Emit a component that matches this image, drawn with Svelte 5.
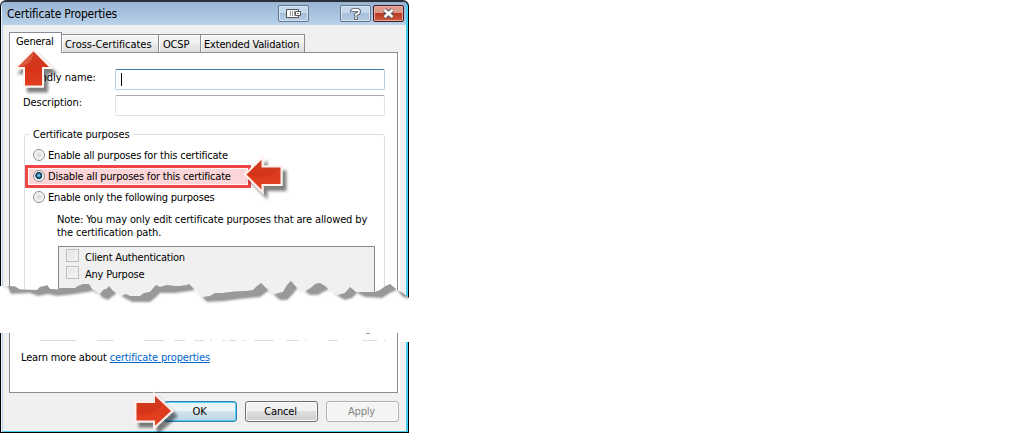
<script>
  const tabs = [
    { label: 'General', w: 53 },
    { label: 'Cross-Certificates', w: 97 },
    { label: 'OCSP', w: 42 },
    { label: 'Extended Validation', w: 104 }
  ];
  const purposes = [
    'Enable all purposes for this certificate',
    'Disable all purposes for this certificate',
    'Enable only the following purposes'
  ];
  let active = $state(0);
  let selected = $state(1);

  const edge = '0,11 8,11 15,11.5 20,14.5 37,15 40,12 45,11 47,10 50,14 58,14.5 60,13 75,13 78,11 83,9 89,9 92,14 97,17 100,19 103,15 107,13.5 109,11 113,16 118,19 121,21 126,19 130,21 140,21 144,18 150,17 156,10 160,12 167,10 175,11 180,11 187,10 189,9 196,16 203,22 210,21 215,18 222,18 235,16.5 247,16 253,15 257,11 261,8 266,13 272,18 275,19 283,17 287,10 291,6 297,13 301,16 306,16 312,12 315,9 320,8 325,11 330,16 338,20 345,18 350,12 356,17 375,17 380,15 385,11.5 390,9 396,14 403,18 409,23';
  const shade = '409,24 403,22 397,15 390,18 382,23 365,22 357,18 352,23 345,25 336,20 329,15 325,16 318,20 310,20 304,16 297,14 292,20 287,25 280,25 273,19 268,16 260,22 240,24 225,26 207,27 202,22 195,15 190,16 175,18 160,18 155,23 150,27 132,27 121,21 117,18 113,21 108,25 103,23 99,19 92,16 88,17 75,19 57,21 48,19 38,21 30,18 11,19 8,12';
</script>

{#snippet arrow(name)}
  <svg class="arrow {name}" viewBox="0 0 48 48" aria-hidden="true">
    <defs>
      <linearGradient id="red-{name}" x1="0" y1="0" x2="0" y2="1">
        <stop offset="0" stop-color="#cf3f28" /><stop offset=".5" stop-color="#d43519" /><stop offset="1" stop-color="#e33b1b" />
      </linearGradient>
      <filter id="drop-{name}" x="-30%" y="-30%" width="180%" height="180%">
        <feDropShadow dx="4" dy="5" stdDeviation="1.7" flood-color="#000" flood-opacity=".5" />
      </filter>
    </defs>
    {#if name === 'up'}
      <path d="M19.5 2 37.5 20H29V38.5H10V20H1.5Z" filter="url(#drop-up)" fill="url(#red-up)" stroke="#fff4ef" stroke-width="2" />
      <path d="M4.5 19Q16 18 20 5L11 13Z" fill="#ef8b78" opacity=".4" />
    {:else if name === 'left'}
      <path d="M3 19.5 20.5 2.5V11.5H39.5V30H20.5V37Z" filter="url(#drop-left)" fill="url(#red-left)" stroke="#fff0ec" stroke-width="2" />
      <path d="M5 20Q28 26 38 13V29H19V33Z" fill="#f04a28" opacity=".3" />
    {:else}
      <path d="M2.5 12H21V3.5L39.5 21 21 38V31.5H2.5Z" filter="url(#drop-right)" fill="url(#red-right)" stroke="#fff0ec" stroke-width="2" />
      <path d="M4 25Q25 24 30 13L37 21 22 35V30H4Z" fill="#f04a28" opacity=".35" />
    {/if}
  </svg>
{/snippet}

<div class="page">
  <section class="window top">
    <header>
      <span class="title">Certificate Properties</span>
      <button class="cap dock" aria-label="Dock">
        <svg width="17" height="11" viewBox="0 0 17 11"><path d="M1.5 1.5h12v8h-12z" fill="#f8f8f8" stroke="#555" /><path d="M5.5 3v5M7.5 3v5M9.5 3v5" stroke="#999" /><path d="M10.5 3.5h5v4h-5z" fill="#fff" stroke="#555" /><path d="M12 5.5h2" stroke="#777" /></svg>
      </button>
      <button class="cap help" aria-label="Help">
        <svg width="12" height="14" viewBox="0 0 12 14" fill="none"><path d="M2 5.2V4Q2 3 3.5 3h4Q9 3 9 4.2v1Q9 6.2 7.5 6.7L6 7.5V9.2M6 10v2.8" stroke="#4d535c" stroke-width="3.6" /><path d="M2 4.6V4Q2 3 3.5 3h4Q9 3 9 4.2v1Q9 6.2 7.5 6.7L6 7.5V8.8M6 10.2v1.9" stroke="#fff" stroke-width="1.8" /></svg>
      </button>
      <button class="cap close" aria-label="Close">
        <svg width="13" height="11" viewBox="0 0 13 11"><path d="M2.5 2 10.5 9M10.5 2 2.5 9" stroke="#555a66" stroke-width="4.6" /><path d="M2.5 2 10.5 9M10.5 2 2.5 9" stroke="#fff" stroke-width="2.5" /></svg>
      </button>
    </header>
    <nav>
      {#each tabs as tab, i}
        <button class="tab" class:on={active === i} style="width:{tab.w}px" onclick={() => (active = i)}>{tab.label}</button>
      {/each}
    </nav>
    <div class="panel">
      <label class="field"><span>Friendly name:</span><span class="input focus"><i></i></span></label>
      <label class="field"><span>Description:</span><span class="input"></span></label>
      <div class="group">
        <div class="legend">Certificate purposes</div>
        <div class="group-body">
          {#each purposes as p, i}
            <button class="radio" class:marked={i === 1} onclick={() => (selected = i)}>
              <span class="dot" class:on={selected === i}></span><span>{p}</span>
            </button>
          {/each}
          <p>Note: You may only edit certificate purposes that are allowed by<br />the certification path.</p>
          <div class="list">
            <div><span class="box"></span>Client Authentication</div>
            <div><span class="box"></span>Any Purpose</div>
          </div>
        </div>
      </div>
    </div>
    <svg class="tear" width="409" height="31" viewBox="0 0 409 31">
      <defs>
        <clipPath id="below"><polygon points="{edge} 409,31 0,31" /></clipPath>
        <filter id="soft"><feGaussianBlur stdDeviation="1" /></filter>
      </defs>
      <polygon points="{edge} 409,31 0,31" fill="#fff" />
      <g clip-path="url(#below)">
        <polygon points="{edge} {shade}" fill="#999" filter="url(#soft)" />
        <polygon points="{edge.slice(5)} {shade}" fill="#999" transform="translate(0 -1.5)" />
      </g>
    </svg>
  </section>

  <section class="window bottom">
    <div class="panel end">
      <svg class="remnant" width="387" height="10" viewBox="0 0 387 10">
        <path d="M30 7.5h36M87 7.5h17M134 7.5h20M164 7.5h11M184 7.5h10M200 7.5h2M212 7.5h3M219 7.5h7M232 7.5h3M244 7.5h20M276 7.5h13M295 7.5h2M318 7.5h10M352 7.5h15M374 7.5h2" stroke="#d5dfe5" />
        <path d="M356 .5h4" stroke="#999" />
      </svg>
      <div class="learn">Learn more about <a href="#properties">certificate properties</a></div>
    </div>
    <footer>
      <button class="btn ok">OK</button><button class="btn">Cancel</button><button class="btn" disabled>Apply</button>
    </footer>
    <div class="corner"></div>
  </section>

  {@render arrow('up')}
  {@render arrow('left')}
  {@render arrow('right')}
</div>

<style>
  :global(body) { margin: 0; background: #fff; }
  .page { position: relative; width: 409px; height: 433px; display: flex; flex-direction: column; justify-content: space-between; font: 11px/14px "DejaVu Sans Condensed", "DejaVu Sans", sans-serif; font-stretch: condensed; color: #000; letter-spacing: -.19px; }
  .page * { box-sizing: border-box; }
  button { font: inherit; letter-spacing: inherit; color: inherit; padding: 0; margin: 0; border: 0; background: none; white-space: nowrap; }
  .window { position: relative; width: 409px; background: #f0f0f0; box-shadow: inset 1px 0 #000, inset -1px 0 #000, inset 2px 0 #e5f3ff, inset 3px 0 #b9d1ea, inset -3px 0 #45cdef; overflow: hidden; }
  .top { height: 306px; border-radius: 6px 6px 0 0; border-top: 2px solid #292e38; }
  header { display: flex; align-items: flex-start; height: 23px; margin: 0 3px 0 2px; padding: 3px 2px 0 5px; background: linear-gradient(#98b4d2, #b9d1ea); }
  .title { flex: 1; font-size: 12px; line-height: 18px; letter-spacing: -.18px; }
  .cap { display: grid; place-items: center; width: 31px; height: 17px; border: 1px solid #65778d; border-radius: 2px; box-shadow: inset 0 0 0 1px #d7e5f4; background: linear-gradient(#c5d7eb 45%, #a6bfda 50%, #b6cce4); }
  .dock { margin-right: 31px; }
  .help { margin-right: 2px; }
  .close { border-color: #431b24; box-shadow: inset 0 0 0 1px #e5aaa0; background: linear-gradient(#dc9a8b 45%, #b93724 50%, #cf5b3c); }
  nav { display: flex; align-items: flex-end; height: 27px; padding-left: 9px; }
  .tab { height: 18px; padding: 2px 0 0 3px; text-align: left; border: 1px solid #898c95; border-left-width: 0; border-bottom: 0; background: linear-gradient(#f3f3f3 45%, #ebebeb 50%, #dddddd); box-shadow: inset 1px 1px #fff; }
  .tab.on { height: 20px; padding: 0 0 1px 6px; background: #fff; border-left-width: 1px; }
  .tab:nth-child(2) { letter-spacing: -.04px; }
  .tab:nth-child(3) { padding-left: 4px; }
  .panel { width: 389px; margin-left: 9px; background: #fff; border: 1px solid #898c95; border-width: 0 1px; box-shadow: 2px 0 #fff; }
  .top .panel { height: 260px; padding: 17px 12px 0 14px; background: linear-gradient(90deg, transparent 51px, #898c95 51px) top / 100% 1px no-repeat, #fff; }
  .field { display: flex; align-items: center; height: 21px; margin: 0 0 5px -1px; letter-spacing: -.05px; }
  .field > span:first-child { width: 92px; margin-top: -5px; }
  .field:first-child > span:first-child { margin-top: -3px; }
  .input { width: 270px; height: 21px; border: 1px solid #e2e3ea; border-top-color: #abadb3; border-radius: 2px; padding: 3px 5px; }
  .input.focus { border-color: #b5cfe7; border-top-color: #3d7bad; }
  .input i { display: block; width: 1px; height: 13px; background: #000; }
  .group { width: 361px; height: 200px; margin-top: 18px; border: 1px solid #d5dfe5; border-radius: 3px; }
  .legend { width: max-content; height: 14px; margin: -7px 0 0 5px; padding: 0 3px; background: #fff; letter-spacing: -.17px; }
  .group-body { padding-top: 3px; }
  .radio { display: flex; align-items: center; height: 21px; padding-left: 8px; gap: 3px; letter-spacing: -.2px; }
  .radio.marked { width: 226px; height: 23px; margin: -1px 0; padding-left: 5px; border: 3px solid #ee4545; background: #fcd5d8; box-shadow: inset 0 0 0 1px #fff7f7; }
  .dot { width: 12px; height: 12px; margin-top: -1px; border: 1px solid #8e8f8f; border-radius: 50%; background: radial-gradient(#ddd 20%, #f8f8f8 60%); box-shadow: inset 0 0 0 1px #f4f4f4; }
  .dot.on { background: radial-gradient(circle at 48% 45%, #70c8ed 0 8%, #1c587e 30%, #10233d 43%, #e5edf1 50%); }
  p { margin: 5px 0 0 32px; line-height: 13px; white-space: nowrap; letter-spacing: -.125px; }
  .list { width: 317px; height: 80px; margin: 7px 0 0 33px; padding: 1px 0 0 7px; background: #f0f0f0; border: 1px solid #828790; letter-spacing: -.22px; }
  .list > div { height: 17px; display: flex; align-items: center; padding-top: 2px; }
  .box { width: 13px; height: 13px; margin: -4px 6px 0 0; border: 1px solid #bcbcbc; background: linear-gradient(135deg, #e2e2e2, #f6f6f6); box-shadow: inset 0 0 0 1px #f3f3f3; }
  .tear { position: absolute; left: 0; bottom: 0; }
  .bottom { height: 100px; border-bottom: 1px solid #000; box-shadow: inset 1px 0 #000, inset -1px 0 #000, inset 2px 0 #e5f3ff, inset 3px 0 #b9d1ea, inset -3px 0 #45cdef, inset 0 -1px #45cdef; }
  .end { height: 60px; border-bottom-width: 1px; }
  .remnant { display: block; }
  .learn { padding: 8px 0 0 11px; letter-spacing: -.15px; }
  a { color: #0066cc; text-decoration: underline; }
  footer { display: flex; justify-content: flex-end; gap: 8px; padding: 8px 10px 0 0; }
  .btn { width: 73px; height: 21px; padding: 1px 2px 0 0; border: 1px solid #707070; border-radius: 3px; background: linear-gradient(#f2f2f2 47%, #dddddd 50%, #cfcfcf); box-shadow: inset 0 0 0 1px #fafafa; }
  .ok { border-color: #3c7fb1; box-shadow: inset 0 0 0 1px #46d1f5; background: linear-gradient(#edf4f7 47%, #d2e3ec 50%, #bdd6e3); }
  .btn:disabled { color: #838383; border-color: #adb2b5; background: #f4f4f4; }
  .corner { position: absolute; top: 0; right: 0; width: 11px; height: 9px; background: #fff; }
  .arrow { position: absolute; width: 48px; height: 48px; overflow: visible; }
  .up { left: 14px; top: 48px; }
  .left { left: 242px; top: 155px; }
  .right { left: 133px; top: 390px; }
</style>
